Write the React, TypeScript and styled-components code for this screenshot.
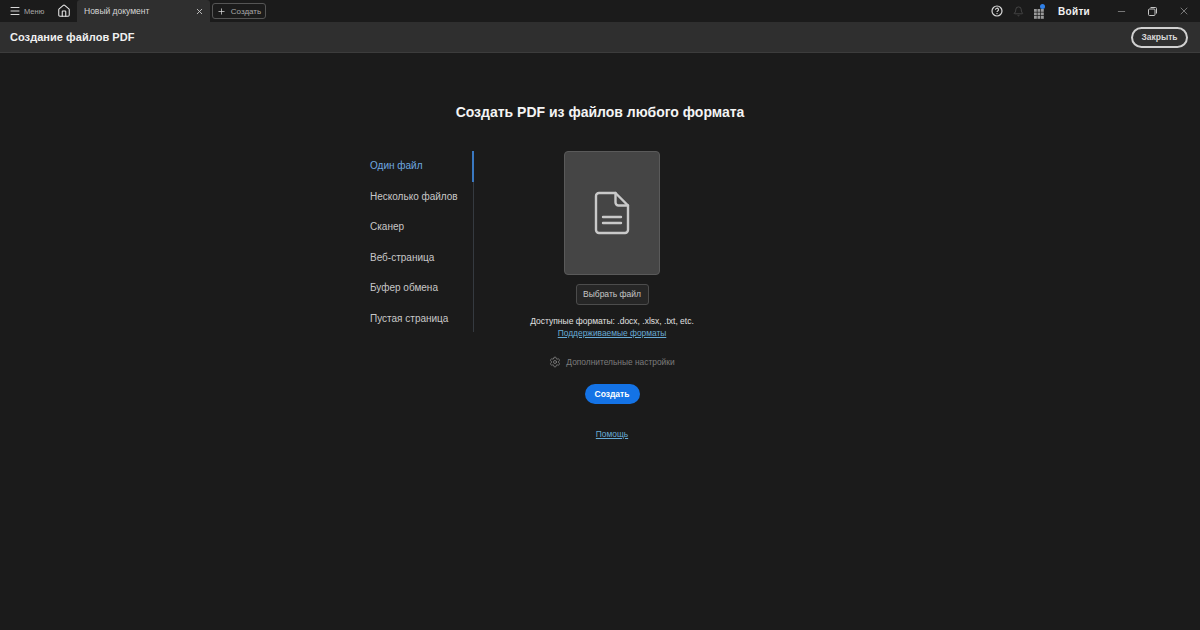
import React from 'react';
import styled, { createGlobalStyle } from 'styled-components';
import { Bell, House, Menu, Minus, Plus, Settings, X } from 'lucide-react';

const GlobalStyle = createGlobalStyle`
  html, body {
    margin: 0;
    padding: 0;
    height: 100%;
    background: #1b1b1b;
    font-family: "Liberation Sans", Arial, sans-serif;
  }
  #root {
    height: 100%;
  }
`

const Page = styled.div`
  width: 1200px;
  height: 630px;
  overflow: hidden;
  display: flex;
  flex-direction: column;
  background: #1b1b1b;
`

const TitleBar = styled.div`
  height: 22px;
  display: flex;
  align-items: center;
  color: #c8c8c8;
  background: #1b1b1b;
`

const MenuButton = styled.div`
  display: flex;
  align-items: center;
  gap: 3px;
  width: 46px;
  padding-left: 9px;
  font-size: 7.5px;
  color: #a8a8a8;
`

const HomeButton = styled.div`
  width: 18px;
  margin-right: 4px;
  display: flex;
  justify-content: center;
  color: #e8e8e8;
`

const Tab = styled.div`
  width: 133px;
  height: 22px;
  margin-right: 2px;
  padding: 0 6px 0 7px;
  box-sizing: border-box;
  display: flex;
  align-items: center;
  justify-content: space-between;
  font-size: 8.5px;
  color: #d6d6d6;
  background: #2f2f2f;
  border-radius: 3px 3px 0 0;
`

const CreateTab = styled.div`
  width: 54px;
  height: 16px;
  box-sizing: border-box;
  display: flex;
  align-items: center;
  justify-content: center;
  gap: 5px;
  font-size: 8px;
  color: #a8a8a8;
  border: 1px solid #555;
  border-radius: 3px;
`

const Spacer = styled.div`
  flex: 1;
`

const AppsWrap = styled.div`
  position: relative;
  width: 10px;
  height: 10px;
  margin: 0 1px 2px 10px;
`

const AppsDot = styled.span`
  position: absolute;
  top: -1px;
  right: -1px;
  width: 5px;
  height: 5px;
  border-radius: 50%;
  background: #2f80e8;
`

const IconSlot = styled.div<{ $left?: number }>`
  display: flex;
  margin-left: ${p => p.$left ?? 0}px;
  color: #d8d8d8;
`

const SignIn = styled.div`
  margin-left: 13px;
  width: 58px;
  font-size: 10px;
  font-weight: 700;
  letter-spacing: 0.3px;
  color: #f2f2f2;
`

const WindowButtons = styled.div`
  display: flex;
  align-items: center;
  gap: 21px;
  margin-right: 10px;
  color: #c4c4c4;
`

const SubBar = styled.div`
  height: 30px;
  padding: 0 12px 0 10px;
  display: flex;
  align-items: center;
  justify-content: space-between;
  background: #2f2f2f;
  border-bottom: 1px solid #3c3c3c;
`

const SubTitle = styled.div`
  font-size: 11px;
  font-weight: 700;
  letter-spacing: 0.05px;
  color: #f0f0f0;
`

const CloseButton = styled.div`
  width: 57px;
  height: 21px;
  padding-bottom: 1px;
  box-sizing: border-box;
  display: flex;
  align-items: center;
  justify-content: center;
  font-size: 8.5px;
  font-weight: 700;
  color: #d8d8d8;
  border: 2px solid #d0d0d0;
  border-radius: 11px;
`

const Main = styled.main`
  flex: 1;
  display: flex;
  flex-direction: column;
  align-items: center;
  padding-top: 50px;
`

const Heading = styled.h1`
  margin: 0 0 30px;
  height: 18px;
  line-height: 18px;
  font-size: 14px;
  font-weight: 700;
  color: #f4f4f4;
`

const Columns = styled.div`
  width: 476px;
  display: flex;
`

const SideNav = styled.nav`
  width: 112px;
  height: 181px;
  box-sizing: border-box;
  border-right: 1px solid #353a40;
`

const NavItem = styled.div<{ $active?: boolean }>`
  height: 30.5px;
  box-sizing: border-box;
  padding: 0 0 1px 8px;
  margin-right: -1px;
  display: flex;
  align-items: center;
  font-size: 10px;
  color: ${p => (p.$active ? '#6ea8e0' : '#c8c8c8')};
  border-right: 2px solid ${p => (p.$active ? '#3a78c0' : 'transparent')};
`

const Content = styled.div`
  width: 276px;
  display: flex;
  flex-direction: column;
  align-items: center;
`

const DropZone = styled.div`
  width: 96px;
  height: 124px;
  box-sizing: border-box;
  display: flex;
  align-items: center;
  justify-content: center;
  background: #454545;
  border: 1px solid #5a5a5a;
  border-radius: 4px;
`

const PickButton = styled.div`
  margin-top: 9px;
  width: 73px;
  height: 21px;
  padding-bottom: 1px;
  box-sizing: border-box;
  display: flex;
  align-items: center;
  justify-content: center;
  font-size: 8.5px;
  color: #c8c8c8;
  background: #262626;
  border: 1px solid #4c4c4c;
  border-radius: 3px;
`

const Formats = styled.div`
  margin-top: 10px;
  height: 12px;
  line-height: 12px;
  font-size: 8.5px;
  color: #e0e0e0;
  white-space: pre;
`

const TextLink = styled.a`
  display: block;
  height: 12px;
  line-height: 12px;
  font-size: 8.4px;
  color: #68abd6;
  text-decoration: underline;
`

const AdvancedRow = styled.div`
  margin-top: 17px;
  display: flex;
  align-items: center;
  gap: 5px;
  font-size: 8.4px;
  color: #7c7c7c;
`

const CreateButton = styled.div`
  margin-top: 16px;
  width: 55px;
  height: 20px;
  display: flex;
  align-items: center;
  justify-content: center;
  font-size: 8.5px;
  font-weight: 700;
  color: #fff;
  background: #1473e6;
  border-radius: 10px;
`

const HelpLink = styled(TextLink)`
  margin-top: 24px;
`

const navItems = ['Один файл', 'Несколько файлов', 'Сканер', 'Веб-страница', 'Буфер обмена', 'Пустая страница'];

const HelpIcon = () => (
  <svg width="12" height="12" viewBox="0 0 12 12" fill="none" stroke="currentColor">
    <circle cx="6" cy="6" r="5" strokeWidth="1.2" />
    <path d="M4.5 4.7a1.5 1.5 0 1 1 2.2 1.3c-.5.3-.7.5-.7 1" strokeWidth="1.1" />
    <circle cx="6" cy="8.6" r=".7" fill="currentColor" stroke="none" />
  </svg>
);

const AppsIcon = () => (
  <svg width="10" height="10" viewBox="0 0 10 10" fill="#9a9a9a">
    {[0, 3.5, 7].map(y => [0, 3.5, 7].map(x => <rect key={`${x}-${y}`} x={x} y={y} width="2.8" height="2.8" />))}
  </svg>
);

const RestoreIcon = () => (
  <svg width="9" height="9" viewBox="0 0 9 9" fill="none" stroke="currentColor" strokeWidth="1">
    <rect x=".5" y="2" width="6.5" height="6.5" rx="1" />
    <path d="M2.5.5h5a1 1 0 0 1 1 1v5" />
  </svg>
);

const FileIcon = () => (
  <svg width="36" height="44" viewBox="0 0 36 44" fill="none" stroke="#c9c9c9" strokeWidth="2.4" strokeLinejoin="round" strokeLinecap="round">
    <path d="M21.5 2H5a3 3 0 0 0-3 3v34a3 3 0 0 0 3 3h26a3 3 0 0 0 3-3V14.5L21.5 2Z" />
    <path d="M21.5 2v9.5a3 3 0 0 0 3 3H34" />
    <path d="M9 26h18M9 32h18" />
  </svg>
);

const App: React.FC = () => {
  return (
    <Page>
      <GlobalStyle />
      <TitleBar>
        <MenuButton>
          <Menu size={12} strokeWidth={2} color="#d8d8d8" />
          Меню
        </MenuButton>
        <HomeButton>
          <House size={14} strokeWidth={1.8} />
        </HomeButton>
        <Tab>
          Новый документ
          <X size={9} strokeWidth={2.4} color="#c8c8c8" />
        </Tab>
        <CreateTab>
          <Plus size={9} strokeWidth={2} color="#d8d8d8" />
          Создать
        </CreateTab>
        <Spacer />
        <IconSlot>
          <HelpIcon />
        </IconSlot>
        <IconSlot $left={10}>
          <Bell size={11} strokeWidth={1.4} color="#5a5a5a" />
        </IconSlot>
        <AppsWrap>
          <AppsIcon />
          <AppsDot />
        </AppsWrap>
        <SignIn>Войти</SignIn>
        <WindowButtons>
          <Minus size={11} strokeWidth={1.2} />
          <RestoreIcon />
          <X size={12} strokeWidth={1.1} />
        </WindowButtons>
      </TitleBar>
      <SubBar>
        <SubTitle>Создание файлов PDF</SubTitle>
        <CloseButton>Закрыть</CloseButton>
      </SubBar>
      <Main>
        <Heading>Создать PDF из файлов любого формата</Heading>
        <Columns>
          <SideNav>
            {navItems.map((item, index) => (
              <NavItem key={item} $active={index === 0}>{item}</NavItem>
            ))}
          </SideNav>
          <Content>
            <DropZone>
              <FileIcon />
            </DropZone>
            <PickButton>Выбрать файл</PickButton>
            <Formats>{'Доступные форматы: .docx, .xlsx, .txt, etc.'}</Formats>
            <TextLink href="#">Поддерживаемые форматы</TextLink>
            <AdvancedRow>
              <Settings size={12} strokeWidth={1.5} color="#8a8a8a" />
              Дополнительные настройки
            </AdvancedRow>
            <CreateButton>Создать</CreateButton>
            <HelpLink href="#">Помощь</HelpLink>
          </Content>
        </Columns>
      </Main>
    </Page>
  );
};

export default App
